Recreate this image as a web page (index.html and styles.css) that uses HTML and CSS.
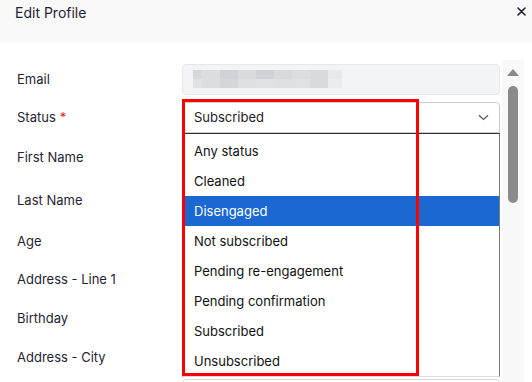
FILE: index.html
```html
<!DOCTYPE html>
<html lang="en">
<head>
    <meta charset="UTF-8">
    <meta name="viewport" content="width=device-width, initial-scale=1.0">
    <title>Edit Profile</title>
    <link rel="stylesheet" href="styles.css">
</head>
<body>
    <div class="modal">
        <div class="modal-header">
            <h2 class="modal-title">Edit Profile</h2>
            <button class="close-btn" aria-label="Close">
                <svg width="9" height="9" viewBox="0 0 9 9"><path d="M1 1L8 8M8 1L1 8" stroke="#1f2433" stroke-width="1.6" stroke-linecap="round"/></svg>
            </button>
        </div>

        <div class="modal-body">
            <form class="profile-form">
                <label class="field-label">Email</label>
                <div class="field"><div class="input input-readonly">
                    <!-- pixelated (hidden) email -->
                    <div class="blurred">
                        <span style="background:#d6d8db"></span><span style="background:#dcdde0"></span><span style="background:#cfd2d6"></span><span style="background:#dadbdf"></span><span style="background:#cfd2d6"></span><span style="background:#d7d9dc"></span><span style="background:#dcdde0"></span><span style="background:#d9dadd"></span><span style="background:#e8e9ec"></span>
                        <span style="background:#e0e1e4"></span><span style="background:#dcdde0"></span><span style="background:#d4d6da"></span><span style="background:#dfe0e3"></span><span style="background:#e0e1e4"></span><span style="background:#dfe0e3"></span><span style="background:#e0e1e4"></span><span style="background:#d9dadd"></span><span style="background:#ebecee"></span>
                    </div>
                </div></div>

                <label class="field-label">Status <span class="required">*</span></label>
                <div class="field"><div class="input select">
                    <span>Subscribed</span>
                    <svg width="11" height="7" viewBox="0 0 11 7"><path d="M1 1.2L5.5 5.5L10 1.2" fill="none" stroke="#555" stroke-width="1.2"/></svg>
                </div></div>

                <label class="field-label">First Name</label>
                <div class="field"><div class="input"></div></div>

                <label class="field-label">Last Name</label>
                <div class="field"><div class="input"></div></div>

                <label class="field-label">Age</label>
                <div class="field"><div class="input"></div></div>

                <label class="field-label">Address - Line 1</label>
                <div class="field"><div class="input"></div></div>

                <label class="field-label">Birthday</label>
                <div class="field"><div class="input"></div></div>

                <label class="field-label">Address - City</label>
                <div class="field"><div class="input"></div></div>

                <span class="field-label"></span>
                <div class="field field-top"><div class="input"></div></div>
            </form>

            <div class="scrollbar">
                <svg class="scroll-arrow" width="14" height="9" viewBox="0 0 14 9"><path d="M7 1L13 8H1Z" fill="#8a8a8a"/></svg>
                <div class="scroll-thumb"></div>
            </div>
        </div>

        <!-- open select list -->
        <ul class="dropdown">
            <li>Any status</li>
            <li>Cleaned</li>
            <li class="active">Disengaged</li>
            <li>Not subscribed</li>
            <li>Pending re-engagement</li>
            <li>Pending confirmation</li>
            <li>Subscribed</li>
            <li>Unsubscribed</li>
        </ul>

        <div class="highlight-box"></div>
    </div>
</body>
</html>
```

FILE: styles.css
```css
body {
    margin: 0;
    font-family: Inter, "Noto Sans", sans-serif;
    color: #1f2433;
    background: #fff;
}

.modal {
    position: relative;
    width: 532px;
    height: 382px;
    overflow: hidden;
}

/* header */
.modal-header {
    height: 43px;
    background: #f9f9f9;
    display: flex;
    align-items: flex-start;
    justify-content: space-between;
    padding: 4px 4px 0 15px;
    box-sizing: border-box;
}

.modal-title {
    margin: 0;
    font-size: 14px;
    font-weight: 400;
    line-height: 18px;
}

.close-btn {
    border: none;
    background: none;
    padding: 3px 2px;
    line-height: 0;
    cursor: pointer;
}

/* body */
.modal-body {
    display: flex;
    padding-top: 17px;
}

.profile-form {
    width: 500px;
    display: grid;
    grid-template-columns: 182px 318px;
    grid-template-rows: 38px 38px 42px 43px 39px 38px 39px 39px 40px;
}

.field-label {
    padding-left: 17px;
    font-size: 13px;
    display: flex;
    align-items: center;
}

.required {
    color: #e02424;
    margin-left: 4px;
}

.field {
    display: flex;
    align-items: center;
}

.field-top {
    align-items: flex-start;
    padding-top: 3px;
}

.input {
    width: 100%;
    height: 31px;
    box-sizing: border-box;
    border: 1px solid #d7dadf;
    border-radius: 4px;
    background: #fff;
}

.input-readonly {
    background: #f3f4f6;
    border-color: #e5e7eb;
    display: flex;
    align-items: center;
    padding: 0 10px;
}

.blurred {
    display: grid;
    grid-template-columns: 9px repeat(7, 18px) 14px;
    grid-template-rows: 9px 9px;
}

.select {
    display: flex;
    align-items: center;
    justify-content: space-between;
    padding: 0 10px 0 11px;
    font-size: 13px;
    color: #222;
    border-radius: 4px 4px 0 0;
    border-color: #c9ccd1;
}

/* scrollbar */
.scrollbar {
    width: 22px;
    margin-left: 2px;
    background: #f8f8f8;
    display: flex;
    flex-direction: column;
    align-items: center;
    padding-top: 8px;
    height: 330px;
}

.scroll-thumb {
    width: 10px;
    height: 117px;
    margin-top: 9px;
    border-radius: 5px;
    background: #8a8a8a;
}

/* open list */
.dropdown {
    position: absolute;
    top: 133px;
    left: 182px;
    width: 318px;
    height: 244px;
    box-sizing: border-box;
    margin: 0;
    padding: 2px 0 0;
    list-style: none;
    background: #fff;
    border: 1px solid #7a7a7a;
    border-top-color: #333;
    border-bottom-color: #ddd;
}

.dropdown li {
    height: 30px;
    line-height: 30px;
    padding-left: 11px;
    font-size: 13px;
    color: #111;
}

.dropdown li.active {
    background: #1b68d3;
    color: #fff;
}

.highlight-box {
    position: absolute;
    top: 99px;
    left: 182px;
    width: 237px;
    height: 277px;
    box-sizing: border-box;
    border: 3px solid #ff0000;
}
```
